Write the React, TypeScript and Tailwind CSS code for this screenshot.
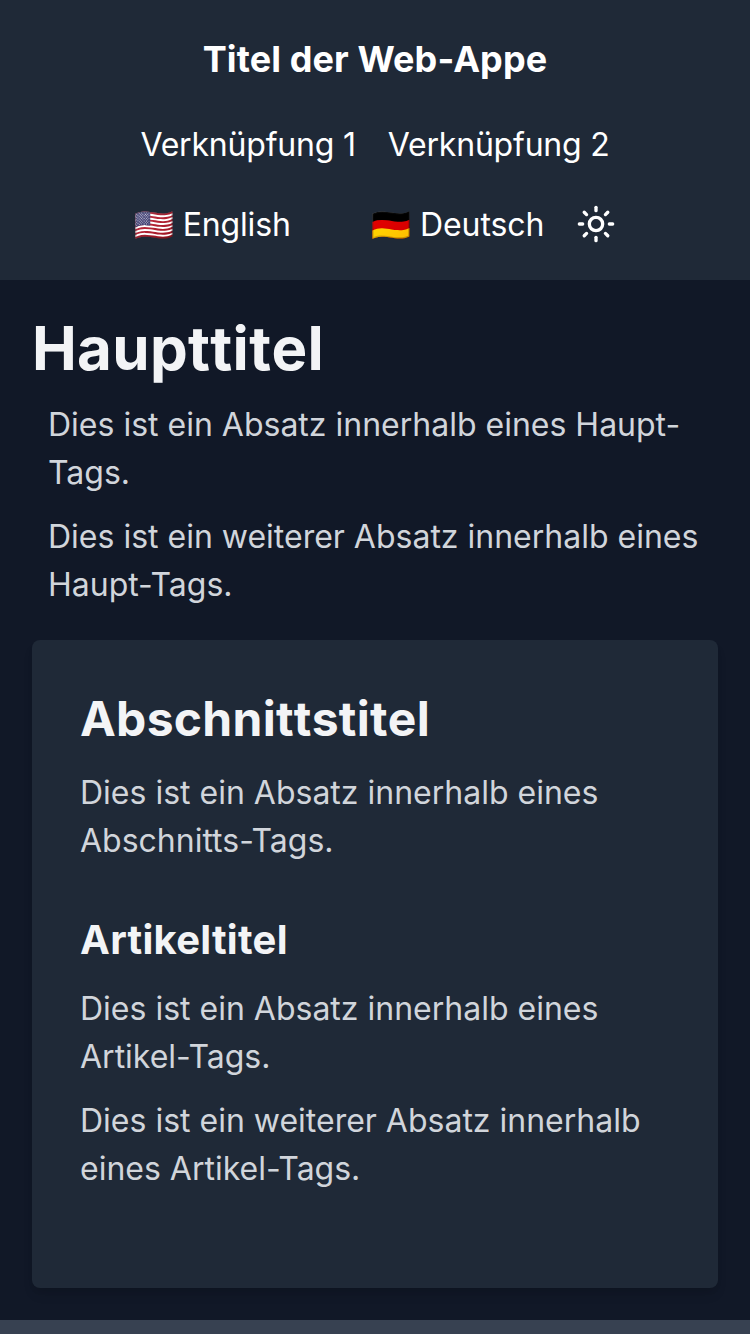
import { Sun } from "lucide-react";

const paragraph = "-mb-px pt-px text-[32px] leading-12 text-[#d1d5db]";

export default function App() {
  return (
    <div className="flex h-[1334px] flex-col overflow-hidden bg-[#111827] font-['Inter',sans-serif] text-white">
      <header className="flex shrink-0 flex-col items-center gap-8 bg-[#1f2937] p-8">
        <h1 className="pb-0.5 text-[36px] leading-[54px] font-bold tracking-[0.1px]">Titel der Web-Appe</h1>
        <nav className="-mb-px flex gap-8 pt-px text-[32px] leading-12 tracking-[-0.2px]">
          <a>Verknüpfung 1</a>
          <a>Verknüpfung 2</a>
        </nav>
        <div className="flex h-12 items-center text-[32px] leading-12">
          <button className="w-[237px] pt-0.5 text-left tracking-[-0.15px]">🇺🇸 English</button>
          <button className="mr-8 w-[173px] pt-0.5 text-left tracking-[-0.05px] whitespace-nowrap">🇩🇪 Deutsch</button>
          <button aria-label="Theme">
            <Sun size={40} strokeWidth={2} />
          </button>
        </div>
      </header>
      <main className="shrink-0 p-8">
        <h1 className="text-[60px] leading-[72px] font-bold tracking-[0.3px] text-[#f3f4f6] [font-kerning:none]">Haupttitel</h1>
        <div className="mt-4 flex flex-col gap-4 px-4">
          <p className={paragraph}>Dies ist ein Absatz innerhalb eines Haupt-Tags.</p>
          <p className={paragraph}>Dies ist ein weiterer Absatz innerhalb eines Haupt-Tags.</p>
        </div>
        <section className="mt-8 rounded-lg bg-[#1f2937] px-12 pt-12 pb-24 shadow-[0_8px_12px_-2px_rgba(0,0,0,0.1),0_4px_8px_-4px_rgba(0,0,0,0.1)]">
          <h2 className="pb-0.5 text-[48px] leading-[62px] font-bold tracking-[0.28px] text-[#f3f4f6] [font-kerning:none]">Abschnittstitel</h2>
          <p className={`mt-4 ${paragraph}`}>Dies ist ein Absatz innerhalb eines Abschnitts-Tags.</p>
          <article className="mt-12">
            <h3 className="text-[40px] leading-14 font-bold tracking-[0.28px] text-[#f3f4f6]">Artikeltitel</h3>
            <div className="mt-4 flex flex-col gap-4">
              <p className={paragraph}>Dies ist ein Absatz innerhalb eines Artikel-Tags.</p>
              <p className={paragraph}>Dies ist ein weiterer Absatz innerhalb eines Artikel-Tags.</p>
            </div>
          </article>
        </section>
      </main>
      <footer className="flex-1 bg-[#374151]" />
    </div>
  );
}
